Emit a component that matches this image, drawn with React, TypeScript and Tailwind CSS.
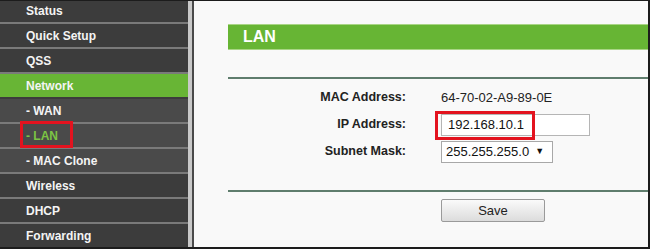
import { FC } from 'react';
import { clsx } from 'clsx';

type MenuItem = { label: string; sub?: boolean; active?: boolean; current?: boolean; marked?: boolean };

const menu: MenuItem[] = [
	{ label: 'Status' },
	{ label: 'Quick Setup' },
	{ label: 'QSS' },
	{ label: 'Network', active: true },
	{ label: '- WAN', sub: true },
	{ label: '- LAN', sub: true, current: true, marked: true },
	{ label: '- MAC Clone', sub: true },
	{ label: 'Wireless' },
	{ label: 'DHCP' },
	{ label: 'Forwarding' },
];

const Sidebar: FC = () => (
	<div className="flex w-[188px] flex-none flex-col bg-[#3c3c3c]">
		{menu.map((m, i) => (
			<div
				key={m.label}
				className={clsx(
					'relative flex flex-none items-center border-b-2 pl-[26px] text-[12px] font-bold',
					i === 0 ? 'h-[23px] pb-[1px]' : 'h-[25px]',
					m.active ? 'border-[#3c3c3c] bg-[#68b535]' : m.sub ? 'border-[#7a7a7a] bg-[#4a4a4a]' : 'border-[#7a7a7a] bg-[#3c3c3c]',
					m.current ? 'text-[#7cc443]' : 'text-[#f4f4f4]',
				)}
			>
				{m.label}
				{m.marked && <div className="pointer-events-none absolute top-[-3px] left-[20px] h-[27px] w-[53px] border-[3px] border-[#e3131f]" />}
			</div>
		))}
	</div>
);

const Row: FC<{ label: string; children: React.ReactNode }> = ({ label, children }) => (
	<div className="flex h-[27px] items-center">
		<div className="w-[178px] text-right text-[12.5px] font-bold text-[#222]">{label}</div>
		<div className="ml-[35px] flex items-center">{children}</div>
	</div>
);

export default function App() {
	return (
		<div
			className="flex h-[249px] w-[650px] overflow-hidden border-t border-r-2 border-b-2 border-[#1c1c1c] bg-[#f9f9f9]"
			style={{ fontFamily: '"Liberation Sans", Arial, sans-serif' }}
		>
			<Sidebar />
			<div className="w-[4px] flex-none bg-[#c9c9c9]" />
			<div className="w-[2px] flex-none bg-[#4a4a4a]" />
			<div className="flex min-w-0 flex-1 flex-col pt-[23px] pl-[34px]">
				<div className="flex h-[26px] items-center border-y border-[#a9d585] bg-[#67b534] pl-[15px] text-[16px] font-bold text-white">LAN</div>
				<div className="mt-[27px] h-[2px] bg-[#5f7d6d]" />
				<div className="mt-[5px] flex flex-col">
					<Row label="MAC Address:">
						<span className="text-[13px] text-[#222]">64-70-02-A9-89-0E</span>
					</Row>
					<Row label="IP Address:">
						<div className="relative">
							<div className="flex h-[22px] w-[149px] items-center border border-[#b5b5b5] bg-white pl-[6px] text-[13px] text-[#111]">192.168.10.1</div>
							<div className="pointer-events-none absolute top-[-3px] left-[-6px] h-[29px] w-[100px] border-[3px] border-[#e3131f]" />
						</div>
					</Row>
					<Row label="Subnet Mask:">
						<div className="flex h-[22px] w-[112px] items-center border border-[#a8a8a8] bg-white pl-[4px] text-[13px] text-[#111]">
							255.255.255.0
							<span className="ml-[6px] text-[9px]">▼</span>
						</div>
					</Row>
				</div>
				<div className="mt-[25px] h-[2px] bg-[#5f7d6d]" />
				<div className="mt-[7px] pl-[213px]">
					<div className="flex h-[23px] w-[104px] items-center justify-center rounded-[2px] border border-[#9a9a9a] bg-gradient-to-b from-[#fafafa] to-[#dcdcdc] text-[13px] text-[#222]">
						Save
					</div>
				</div>
			</div>
		</div>
	);
}
